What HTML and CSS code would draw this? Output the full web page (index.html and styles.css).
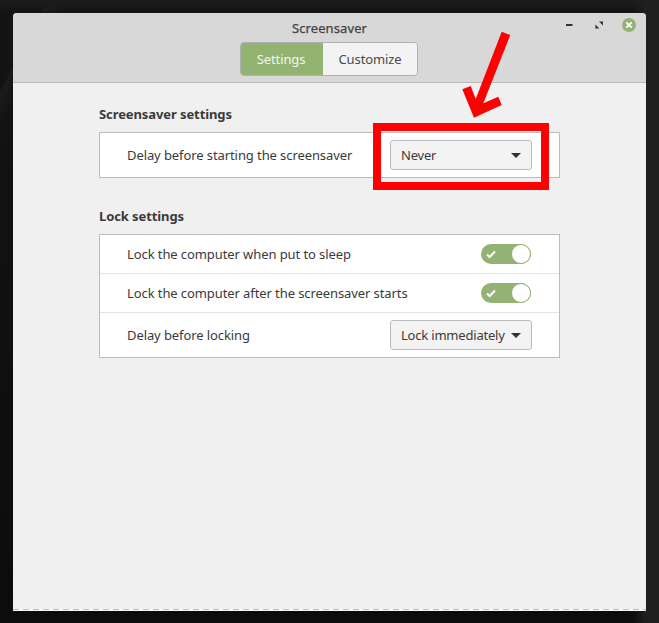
FILE: index.html
```html
<!DOCTYPE html>
<html lang="en">
<head>
<meta charset="utf-8">
<title>Screensaver</title>
<link rel="stylesheet" href="styles.css">
</head>
<body>
<div class="desktop">
  <main class="window">
    <header class="header">
      <div class="titlebar">
        <span class="title">Screensaver</span>
        <div class="controls">
          <svg class="ctl" width="16" height="16" viewBox="0 0 16 16"><rect x="5" y="7" width="6.500" height="2" fill="#333"/></svg>
          <svg class="ctl" width="16" height="16" viewBox="0 0 16 16"><path d="M8 4.600h4V8.600zM8.400 11.600H4.400V7.600z" fill="#333"/></svg>
          <svg class="ctl-close" width="16" height="16" viewBox="0 0 16 16"><circle cx="8" cy="8" r="7" fill="#93b374"/><path d="M5.300 5.300l5.400 5.400M10.700 5.300l-5.400 5.400" stroke="#fff" stroke-width="1.800"/></svg>
        </div>
      </div>
      <div class="switcher">
        <span class="tab tab-on">Settings</span>
        <span class="tab">Customize</span>
      </div>
    </header>
    <div class="content">
      <section class="section">
        <h2 class="heading">Screensaver settings</h2>
        <div class="card">
          <div class="row row-tall">
            <span>Delay before starting the screensaver</span>
            <div class="combo"><span>Never</span><i class="caret"></i></div>
          </div>
        </div>
      </section>
      <section class="section">
        <h2 class="heading">Lock settings</h2>
        <div class="card">
          <div class="row row-short">
            <span>Lock the computer when put to sleep</span>
            <div class="switch"><svg width="12" height="12" viewBox="0 0 12 12"><path d="M2 6.500l2.700 2.500L10 3.500" fill="none" stroke="#fff" stroke-width="2"/></svg><i class="knob"></i></div>
          </div>
          <div class="row row-short">
            <span>Lock the computer after the screensaver starts</span>
            <div class="switch"><svg width="12" height="12" viewBox="0 0 12 12"><path d="M2 6.500l2.700 2.500L10 3.500" fill="none" stroke="#fff" stroke-width="2"/></svg><i class="knob"></i></div>
          </div>
          <div class="row row-tall">
            <span>Delay before locking</span>
            <div class="combo"><span>Lock immediately</span><i class="caret"></i></div>
          </div>
        </div>
      </section>
    </div>
    <div class="edge"></div>
  </main>
  <div class="redbox"></div>
  <svg class="arrow" width="60" height="95" viewBox="0 0 60 95"><polygon points="41.700,1.700 50.300,5 23.300,73.300 38.300,66.700 41.700,75 14,87.700 2.300,59.300 10.700,56 15.700,69" fill="#f00"/></svg>
</div>
</body>
</html>
```
FILE: styles.css
```css
* { box-sizing: border-box; }
html, body { margin: 0; height: 100%; }
body {
  font-family: "Noto Sans", "Open Sans", sans-serif;
  font-size: 13px;
  letter-spacing: -0.09px;
  color: #3a3a3a;
  background: #0d0d0d;
}
.desktop {
  position: relative;
  width: 659px;
  height: 623px;
  padding: 13px 13px 12px;
  overflow: hidden;
  background:
    linear-gradient(118deg, transparent 0 42px, #1b1b1b 44px, transparent 60px),
    linear-gradient(90deg, transparent 0 96%, #1f1f1f 98%),
    linear-gradient(180deg, #1c1c1c 0, #141414 13px, #0c0c0c 100%);
}
.window {
  display: flex;
  flex-direction: column;
  width: 633px;
  height: 598px;
  background: #f0f0f0;
  border-radius: 4px 4px 0 0;
}
.header {
  height: 70px;
  background: #d8d8d8;
  border-bottom: 1px solid #b9b9b9;
  border-radius: 4px 4px 0 0;
  display: flex;
  flex-direction: column;
  align-items: center;
}
.titlebar {
  position: relative;
  width: 100%;
  height: 29px;
  display: flex;
  justify-content: center;
  align-items: center;
}
.title {
  font-size: 13px;
  letter-spacing: 0.1px;
  color: #444;
  -webkit-text-stroke: 0.25px #444;
}
.controls {
  position: absolute;
  right: 9px;
  top: 4px;
  display: flex;
  gap: 14px;
  align-items: center;
}
.switcher {
  display: flex;
  width: 178px;
  height: 34px;
  margin-right: 1px;
  border: 1px solid #b0b0b0;
  border-radius: 4px;
  overflow: hidden;
}
.tab {
  display: flex;
  align-items: center;
  justify-content: center;
  width: 95px;
  background: #f3f3f3;
  color: #4a4a4a;
}
.tab-on { width: 83px; padding-right: 2px; background: #92b372; color: #f4f7ee; }
.content {
  display: flex;
  flex-direction: column;
  gap: 29px;
  padding: 22px 86px 0;
}
.section { display: flex; flex-direction: column; gap: 8px; }
.heading { margin: 0; font-size: 13px; line-height: 19px; font-weight: 700; color: #3a3a3a; }
.card {
  background: #fff;
  border: 1px solid #bcbcbc;
  display: flex;
  flex-direction: column;
}
.row {
  box-sizing: content-box;
  display: flex;
  align-items: center;
  justify-content: space-between;
  padding: 0 27px;
  border-top: 1px solid #e4e4e4;
}
.row:first-child { border-top: 0; }
.row-short { height: 38px; }
.row-tall { height: 44px; }
.combo {
  display: flex;
  align-items: center;
  justify-content: space-between;
  width: 142px;
  height: 30px;
  padding: 0 10px;
  letter-spacing: -0.2px;
  background: #f3f3f3;
  border: 1px solid #bcbcbc;
  border-radius: 3px;
}
.caret {
  width: 0;
  height: 0;
  border: 5px solid transparent;
  border-top: 5px solid #333;
  border-bottom: 0;
}
.switch {
  display: flex;
  align-items: center;
  justify-content: space-between;
  width: 50px;
  height: 20px;
  margin-right: 1px;
  padding: 0 0 0 4px;
  border-radius: 10px;
  background: #93b374;
}
.knob {
  width: 20px;
  height: 20px;
  border-radius: 50%;
  background: #fff;
  border: 1px solid #93b374;
}
.edge {
  margin-top: auto;
  height: 2px;
  background:
    repeating-linear-gradient(90deg, #bdbdbd 0 6px, #fff 6px 10px) top / 100% 1px no-repeat,
    #f7f7f7;
}
.redbox {
  position: absolute;
  left: 373px;
  top: 123px;
  width: 176px;
  height: 67px;
  border: 8px solid #f00;
}
.arrow { position: absolute; left: 460px; top: 30px; }
```
